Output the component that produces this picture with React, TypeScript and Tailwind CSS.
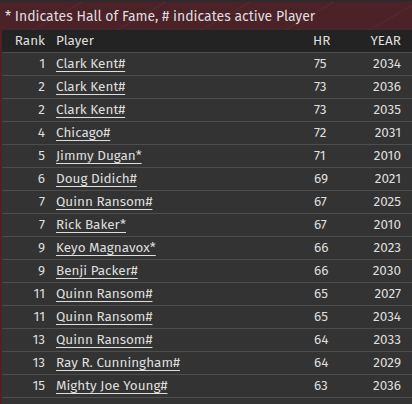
const rows: [number, string, number, number][] = [
  [1, "Clark Kent#", 75, 2034],
  [2, "Clark Kent#", 73, 2036],
  [2, "Clark Kent#", 73, 2035],
  [4, "Chicago#", 72, 2031],
  [5, "Jimmy Dugan*", 71, 2010],
  [6, "Doug Didich#", 69, 2021],
  [7, "Quinn Ransom#", 67, 2025],
  [7, "Rick Baker*", 67, 2010],
  [9, "Keyo Magnavox*", 66, 2023],
  [9, "Benji Packer#", 66, 2030],
  [11, "Quinn Ransom#", 65, 2027],
  [11, "Quinn Ransom#", 65, 2034],
  [13, "Quinn Ransom#", 64, 2033],
  [13, "Ray R. Cunningham#", 64, 2029],
  [15, "Mighty Joe Young#", 63, 2036],
];

export default function App() {
  return (
    <div className="w-[412px] h-[404px] overflow-hidden bg-[#5a1c22] font-['Fira_Sans','Open_Sans',sans-serif] text-[#dedede]">
      <div className="h-[30px] border-t-2 border-[#2c2c2c] bg-[#4c2229] bg-[repeating-linear-gradient(150deg,transparent_0px,transparent_40px,rgba(255,255,255,0.04)_41px,transparent_42px)] pl-[5px] flex items-center text-[14px]">
        * Indicates Hall of Fame, # indicates active Player
      </div>
      <div className="ml-[2px] bg-[#333333] text-[13.5px]">
        <div className="h-[23px] flex items-center bg-[#232323] border-b border-[#4d4d4d]">
          <div className="w-[43px] text-right">Rank</div>
          <div className="ml-[11px] flex-1">Player</div>
          <div className="w-[56px]">HR</div>
          <div className="w-[32px] text-right">YEAR</div>
          <div className="w-[11px]" />
        </div>
        {rows.map(([rank, name, hr, year], i) => (
          <div key={i} className="h-[23px] flex items-center border-b border-[#4d4d4d]">
            <div className="w-[43px] text-right">{rank}</div>
            <div className="ml-[11px] flex-1">
              <span className="underline underline-offset-[3px] decoration-1">{name}</span>
            </div>
            <div className="w-[56px] pl-[1px]">{hr}</div>
            <div className="w-[32px] text-right">{year}</div>
            <div className="w-[11px]" />
          </div>
        ))}
        <div className="h-[23px]" />
      </div>
    </div>
  );
}
